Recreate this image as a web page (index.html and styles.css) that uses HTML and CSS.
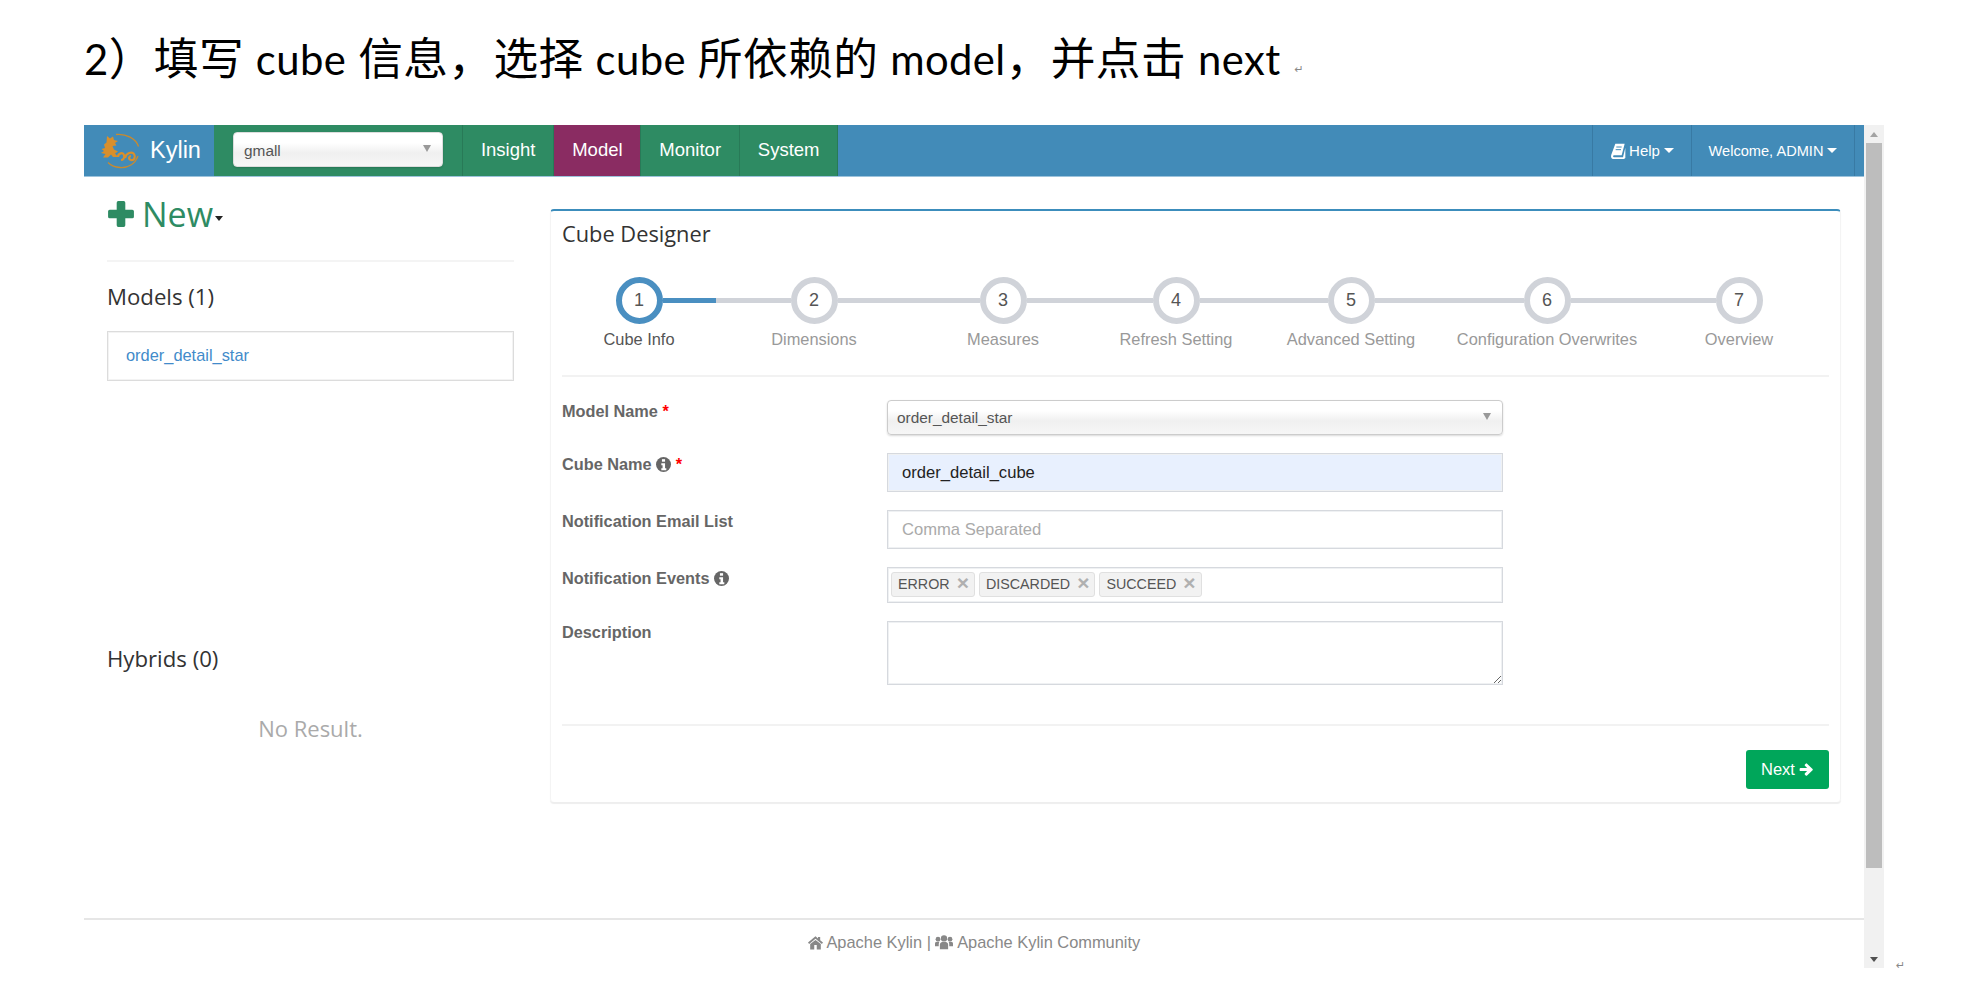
FILE: index.html
```html
<!DOCTYPE html>
<html lang="zh-CN">
<head>
  <meta charset="UTF-8">
  <title>Cube Designer</title>
  <link rel="stylesheet" href="styles.css">
</head>
<body>
  <div class="doc-line">
    <span class="doc-text"><span class="en">2</span>）填写 <span class="en">cube</span> 信息，选择 <span class="en">cube</span> 所依赖的 <span class="en">model</span>，并点击 <span class="en">next</span></span>
    <span class="para-mark">↵</span>
  </div>

  <div class="shot">
    <div class="app">
      <nav class="navbar">
        <a class="brand">
          <svg class="logo" viewBox="0 0 40 36">
            <path d="M16 1.500c10-1 20 4 22.500 12M38 23c-3 8-10 12-18 11.500-5-.3-9-2-12-5" fill="none" stroke="#c98a2e" stroke-width="1.300"/>
            <path d="M7 3l3 2.500 3-2 1 3.500 4 1-3 2 1.500 2.500-4 .5 1.500 3.500 4 2-3 2 3 3.500h-5l-2-2.500-3 3H3l2.500-3.500L1 20l3-2-2.500-2 3.500-1-1-3.500 2.500-2z" fill="#d98f2b"/>
            <path d="M18 24c0-4 5-5 6-2s-1 5-3 5M25 25c1-5 7-7 9-4 2 3 0 7-3 6-3-1-2-4 0-4" fill="none" stroke="#d98f2b" stroke-width="2.200"/>
          </svg>
          Kylin
        </a>
        <div class="nav-green">
          <div class="project-pick"><div class="pick pick-small">gmall<i class="pick-arrow"></i></div></div>
          <a class="nav-tab">Insight</a>
          <a class="nav-tab active">Model</a>
          <a class="nav-tab">Monitor</a>
          <a class="nav-tab">System</a>
        </div>
        <div class="nav-right">
          <a class="nav-link help">
            <svg class="icon-book" viewBox="0 0 24 24"><path d="M8 1h14l-4.500 17.500H6c-1.800 0-1.800 3 0 3h13.500L23 7v15.500L21 24H5c-3 0-4-3-3.200-6z" fill="#fff"/><path d="M9.500 6h8M8.500 10h8" stroke="#428bb8" stroke-width="1.500"/></svg>
            Help<i class="caret"></i>
          </a>
          <a class="nav-link welcome">Welcome, ADMIN<i class="caret"></i></a>
        </div>
      </nav>

      <div class="content">
        <aside class="sidebar">
          <div class="new-btn">
            <svg class="icon-plus" viewBox="0 0 26 26"><path d="M9 2.500a1.500 1.500 0 0 1 1.500-1.500h5A1.500 1.500 0 0 1 17 2.500V9h6.500a1.500 1.500 0 0 1 1.500 1.500v5a1.500 1.500 0 0 1-1.500 1.500H17v6.500a1.500 1.500 0 0 1-1.500 1.500h-5A1.500 1.500 0 0 1 9 23.500V17H2.500A1.500 1.500 0 0 1 1 15.500v-5A1.500 1.500 0 0 1 2.500 9H9z" fill="#2e8b63"/></svg>
            <span>New</span><i class="caret caret-dark"></i>
          </div>
          <h3 class="side-title">Models (1)</h3>
          <div class="model-box"><a>order_detail_star</a></div>
          <h3 class="side-title hybrids">Hybrids (0)</h3>
          <p class="no-result">No Result.</p>
        </aside>

        <section class="card">
          <h3 class="card-title">Cube Designer</h3>
          <ol class="steps">
            <li class="step active"><div class="step-row"><i class="bar none"></i><b class="dot">1</b><i class="bar"></i></div><span>Cube Info</span></li>
            <li class="step"><div class="step-row"><i class="bar"></i><b class="dot">2</b><i class="bar"></i></div><span>Dimensions</span></li>
            <li class="step"><div class="step-row"><i class="bar"></i><b class="dot">3</b><i class="bar"></i></div><span>Measures</span></li>
            <li class="step"><div class="step-row"><i class="bar"></i><b class="dot">4</b><i class="bar"></i></div><span>Refresh Setting</span></li>
            <li class="step"><div class="step-row"><i class="bar"></i><b class="dot">5</b><i class="bar"></i></div><span>Advanced Setting</span></li>
            <li class="step"><div class="step-row"><i class="bar"></i><b class="dot">6</b><i class="bar"></i></div><span>Configuration Overwrites</span></li>
            <li class="step"><div class="step-row"><i class="bar"></i><b class="dot">7</b><i class="bar none"></i></div><span>Overview</span></li>
          </ol>

          <form class="form">
            <label>Model Name <em>*</em></label>
            <div class="pick pick-large">order_detail_star<i class="pick-arrow"></i></div>

            <label>Cube Name
              <svg class="icon-info" viewBox="0 0 24 24"><circle cx="12" cy="12" r="12" fill="#666"/><rect x="9.500" y="3.500" width="5" height="4" fill="#fff"/><path d="M8.500 10h6v8h2v3h-8v-3h2v-5h-2z" fill="#fff"/></svg>
              <em>*</em></label>
            <input class="field filled" type="text" value="order_detail_cube">

            <label>Notification Email List</label>
            <input class="field" type="text" placeholder="Comma Separated">

            <label>Notification Events
              <svg class="icon-info" viewBox="0 0 24 24"><circle cx="12" cy="12" r="12" fill="#666"/><rect x="9.500" y="3.500" width="5" height="4" fill="#fff"/><path d="M8.500 10h6v8h2v3h-8v-3h2v-5h-2z" fill="#fff"/></svg>
            </label>
            <div class="tags">
              <span class="tag">ERROR<i>×</i></span>
              <span class="tag">DISCARDED<i>×</i></span>
              <span class="tag">SUCCEED<i>×</i></span>
            </div>

            <label>Description</label>
            <textarea class="desc"></textarea>
          </form>

          <div class="card-foot">
            <a class="btn-next">Next
              <svg class="icon-arrow" viewBox="0 0 24 24"><path d="M2.500 9.500h10.500L9.500 6a1.500 1.500 0 0 1 0-2.100l1.300-1.300a1.500 1.500 0 0 1 2.100 0l8.800 8.400a1.500 1.500 0 0 1 0 2.100l-8.800 8.400a1.500 1.500 0 0 1-2.100 0l-1.300-1.300a1.500 1.500 0 0 1 0-2.100l3.500-3.600H2.500A1.500 1.500 0 0 1 1 13v-2a1.500 1.500 0 0 1 1.500-1.500z" fill="#fff"/></svg>
            </a>
          </div>
        </section>
      </div>

      <footer class="footer">
        <svg class="icon-foot" viewBox="0 0 24 24"><path d="M12 2 0 12l1.800 2.200L12 6l10.200 8.200L24 12l-4.500-3.700V3h-3.500v2.400z" fill="#888"/><path d="M3.500 14.500V23h6.500v-7h4v7h6.500v-8.500L12 7.800z" fill="#888"/></svg>
        <span>Apache Kylin</span> | 
        <svg class="icon-foot wide" viewBox="0 0 24 20"><circle cx="12" cy="4.500" r="4.200" fill="#888"/><circle cx="4" cy="5.500" r="3.200" fill="#888"/><circle cx="20" cy="5.500" r="3.200" fill="#888"/><path d="M6.500 19v-6c0-2.800 2-3.800 3-3.800h5c1 0 3 1 3 3.800v6z" fill="#888"/><path d="M0 15v-3.500c0-1.500 1-2.500 2.500-2.500H6c-1 1.500-1 2.500-1 6zM24 15v-3.500c0-1.500-1-2.500-2.500-2.500H18c1 1.500 1 2.500 1 6z" fill="#888"/></svg>
        <span>Apache Kylin Community</span>
      </footer>
    </div>

    <div class="scrollbar">
      <div class="scroll-btn"><i class="arrow-up"></i></div>
      <div class="scroll-track"><div class="scroll-thumb"></div></div>
      <div class="scroll-btn"><i class="arrow-down"></i></div>
    </div>
    <span class="para-mark end">↵</span>
  </div>
</body>
</html>
```

FILE: styles.css
```css
* {
  box-sizing: border-box;
}
html, body {
  height: 100%;
  overflow: hidden;
}
body {
  margin: 0;
  background: #fff;
  font-family: "Liberation Sans", Arial, sans-serif;
  font-size: 16.4px;
  color: #333;
}
i, em {
  font-style: normal;
}

/* text line above the screenshot */
.doc-line {
  height: 125px;
  padding: 31px 0 0 84px;
  display: flex;
  align-items: flex-start;
}
.doc-text {
  font-family: "Lato", "Noto Sans CJK SC", sans-serif;
  font-size: 44.700px;
  line-height: 54px;
  letter-spacing: .42px;
  color: #000;
  white-space: nowrap;
}
.doc-text .en {
  font-size: 41.800px;
}
.para-mark {
  font-family: "DejaVu Sans", sans-serif;
  font-size: 11px;
  line-height: 12px;
  color: #888;
  margin: 33px 0 0 14px;
}

.shot {
  display: flex;
  height: 843px;
  margin-left: 84px;
}
.app {
  width: 1780px;
  display: flex;
  flex-direction: column;
}
.para-mark.end {
  margin: 835px 0 0 12px;
}

/* navbar */
.navbar {
  flex: none;
  display: flex;
  height: 52px;
  background: #428bb8;
  border-bottom: 1px solid #9cc3dc;
  color: #fff;
}
.brand {
  width: 130px;
  display: flex;
  align-items: center;
  padding: 0 0 0 16px;
  font-size: 23.500px;
}
.logo {
  width: 40px;
  height: 36px;
  margin-right: 10px;
}
.nav-green {
  display: flex;
  background: #2e8b63;
}
.project-pick {
  padding: 7px 19px 0;
  border-right: 1px solid #287a57;
}
.pick {
  position: relative;
  color: #555;
  background: linear-gradient(#fff 0, #fff 30%, #f0f0f0 60%, #f6f6f6 100%);
  border-radius: 4px;
  border: 1px solid #ddd;
  box-shadow: 0 1px 2px rgba(0, 0, 0, .15);
  font-size: 15.400px;
}
.pick-small {
  width: 210px;
  height: 35px;
  padding: 8px 10px;
  line-height: 20px;
}
.pick-large {
  height: 35px;
  padding: 6px 9px;
  line-height: 22px;
  border-color: #ccc;
}
.pick-arrow {
  position: absolute;
  right: 11px;
  top: 12px;
  border-style: solid;
  border-width: 7px 4px 0;
  border-color: #999 transparent transparent;
}
.nav-tab {
  padding: 0 17.900px;
  font-size: 18.500px;
  line-height: 49px;
  color: #fff;
  border-right: 1px solid #287a57;
}
.nav-tab.active {
  background: #8a2c62;
}
.nav-right {
  margin-left: auto;
  margin-right: 9px;
  display: flex;
  border-right: 1px solid #387aa4;
}
.nav-link {
  display: flex;
  align-items: center;
  justify-content: center;
  height: 51px;
  border-left: 1px solid #387aa4;
}
.help {
  width: 99px;
  font-size: 15px;
}
.welcome {
  width: 163px;
  font-size: 14.600px;
}
.icon-book {
  width: 16px;
  height: 16px;
  margin-right: 3px;
}
.caret {
  display: inline-block;
  margin-left: 4px;
  border-style: solid;
  border-width: 5px 5px 0;
  border-color: #fff transparent transparent;
}

/* page body */
.content {
  flex: 1;
  display: flex;
  padding: 0 0 0 23px;
}
.sidebar {
  width: 407px;
  flex: none;
}
.new-btn {
  display: flex;
  align-items: center;
  height: 85px;
  padding: 0 0 10px;
  border-bottom: 2px solid #f4f4f4;
  font-family: "Open Sans", sans-serif;
  font-size: 34px;
  color: #2e8b63;
}
.icon-plus {
  width: 28px;
  height: 28px;
  margin-right: 7px;
}
.caret-dark {
  margin: 10px 0 0 2px;
  border-width: 5px 4.500px 0;
  border-color: #222 transparent transparent;
}
.side-title, .card-title {
  margin: 0;
  font-family: "Open Sans", sans-serif;
  font-weight: 400;
  color: #333;
}
.side-title {
  font-size: 22.200px;
  line-height: 28px;
  margin-top: 21px;
}
.model-box {
  margin-top: 20px;
  height: 50px;
  padding: 0 18px;
  border: 1px solid #dcdcdc;
  box-shadow: 0 0 0 1px #f3f3f3 inset;
  line-height: 47px;
  font-size: 16.400px;
  color: #428bca;
}
.hybrids {
  margin-top: 264px;
}
.no-result {
  margin: 41px 0 0;
  text-align: center;
  font-family: "Open Sans", sans-serif;
  font-size: 22px;
  line-height: 28px;
  color: #aaa;
}

/* cube designer card */
.card {
  width: 1291px;
  height: 593px;
  margin: 32px 0 0 36px;
  padding: 0 11px 0 11px;
  border-top: 2px solid #3c8dbc;
  border-left: 1px solid #f4f4f4;
  border-right: 1px solid #f4f4f4;
  border-radius: 4px;
  box-shadow: 0 2px 1px #eee;
}
.card-title {
  font-size: 21.800px;
  line-height: 28px;
  margin-top: 9px;
}
.steps {
  display: grid;
  grid-template-columns: 154px 196px 182px 164px 186px 206px 178px;
  list-style: none;
  margin: 29px 0 0;
  padding: 0 0 26px;
  border-bottom: 2px solid #f2f2f2;
}
.step {
  text-align: center;
  color: #999;
}
.step-row {
  display: flex;
  align-items: center;
  height: 47px;
  margin-bottom: 6px;
}
.bar {
  flex: 1;
  height: 5px;
  background: #d0d3d9;
}
.bar.none {
  background: none;
}
.dot {
  flex: none;
  width: 47px;
  height: 47px;
  border: 6px solid #d0d3d9;
  border-radius: 50%;
  background: #fff;
  line-height: 35px;
  font-weight: 400;
  font-size: 18px;
  color: #555;
}
.step.active {
  color: #555;
}
.step.active .dot {
  border-color: #4a8fc1;
}
.step.active .bar {
  background: #4a8fc1;
}
.step.active .bar.none {
  background: none;
}

/* form */
.form {
  display: grid;
  grid-template-columns: 325px 616px;
  row-gap: 18px;
  margin-top: 23px;
  padding-bottom: 39px;
  border-bottom: 2px solid #f2f2f2;
}
.form label {
  font-weight: 700;
  font-size: 16.300px;
  line-height: 22px;
  color: #666;
}
.form label em {
  color: #f00;
}
.icon-info {
  width: 15px;
  height: 15px;
  vertical-align: -2px;
}
.field {
  display: block;
  width: 100%;
  height: 39px;
  padding: 0 14px;
  border: 1px solid #d6d9de;
  box-shadow: 0 0 0 1px #eff1f3 inset;
  font: 16.600px "Liberation Sans", Arial, sans-serif;
  color: #222;
  outline: none;
}
.field.filled {
  background: #e8f0fe;
}
.field::placeholder {
  color: #aaa;
}
.tags {
  display: flex;
  gap: 4px;
  height: 36px;
  padding: 4px 3px;
  border: 1px solid #d6d9de;
  box-shadow: 0 0 0 1px #eff1f3 inset;
}
.tag {
  display: flex;
  align-items: center;
  height: 25px;
  padding: 0 5px 2px 6px;
  background: #f2f2f2;
  border: 1px solid #e0e0e0;
  border-radius: 3px;
  font-size: 14.300px;
  color: #555;
}
.tag i {
  margin: -3px 0 0 7px;
  font-size: 21px;
  font-weight: 700;
  color: #b0b0b0;
  line-height: 19px;
}
.desc {
  display: block;
  width: 100%;
  height: 64px;
  border: 1px solid #d6d9de;
  box-shadow: 0 0 0 1px #eff1f3 inset;
  resize: both;
  outline: none;
}
.card-foot {
  display: flex;
  justify-content: flex-end;
  padding: 24px 0 0;
}
.btn-next {
  display: flex;
  align-items: center;
  justify-content: center;
  width: 83px;
  height: 39px;
  background: #00a65a;
  border-radius: 3px;
  color: #fff;
  font-size: 16.500px;
}
.icon-arrow {
  width: 15px;
  height: 15px;
  margin-left: 4px;
}

/* footer */
.footer {
  margin-top: auto;
  height: 50px;
  border-top: 2px solid #e6e6e6;
  text-align: center;
  padding-top: 10px;
  line-height: 24px;
  color: #888;
}
.icon-foot {
  width: 15px;
  height: 15px;
  vertical-align: -2px;
}
.icon-foot.wide {
  width: 18px;
}

/* scrollbar on the captured window */
.scrollbar {
  width: 20px;
  display: flex;
  flex-direction: column;
  background: #f1f1f1;
}
.scroll-btn {
  flex: none;
  height: 18px;
  display: flex;
  align-items: center;
  justify-content: center;
}
.scroll-track {
  flex: 1;
  padding: 0 2px;
}
.scroll-thumb {
  height: 725px;
  background: #bdbdbd;
}
.arrow-up, .arrow-down {
  border-style: solid;
  border-width: 0 4px 5px;
  border-color: transparent transparent #a3a3a3;
}
.arrow-down {
  border-width: 5px 4px 0;
  border-color: #505050 transparent transparent;
}
```
